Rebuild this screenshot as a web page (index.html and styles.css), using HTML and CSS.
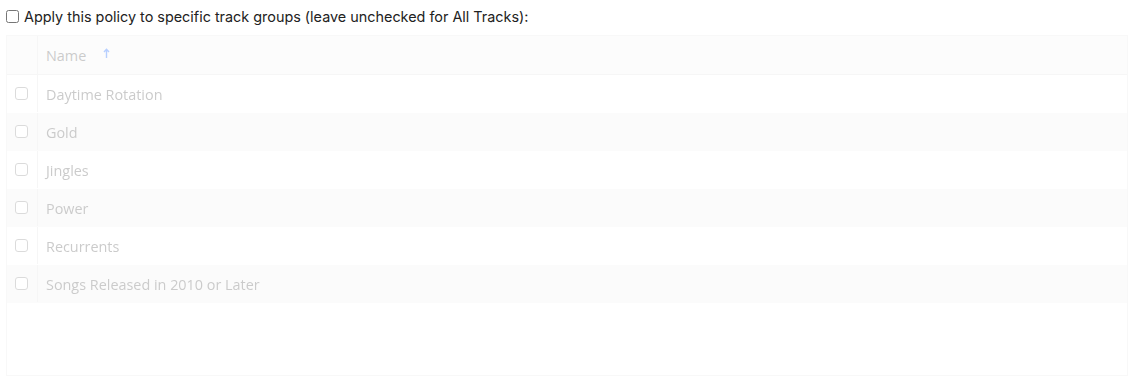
FILE: index.html
```html
<!DOCTYPE html>
<html lang="en">
<head>
  <meta charset="UTF-8">
  <meta name="viewport" content="width=device-width, initial-scale=1.0">
  <title>Track Group Policy</title>
  <link rel="stylesheet" href="styles.css">
</head>
<body>
  <div class="policy">
    <label class="scope">
      <input type="checkbox" id="specific">
      <span>Apply this policy to specific track groups (leave unchecked for All Tracks):</span>
    </label>

    <div class="grid disabled">
      <div class="row header">
        <div class="cell check"></div>
        <div class="cell name">Name
          <svg class="sort" width="7" height="10" viewBox="0 0 7 10">
            <path d="M3.5 10V1.5M1 4L3.5 1.2L6 4" fill="none" stroke="currentColor" stroke-width="1.4"/>
          </svg>
        </div>
      </div>
      <div class="row">
        <div class="cell check"><span class="box"></span></div>
        <div class="cell name">Daytime Rotation</div>
      </div>
      <div class="row odd">
        <div class="cell check"><span class="box"></span></div>
        <div class="cell name">Gold</div>
      </div>
      <div class="row">
        <div class="cell check"><span class="box"></span></div>
        <div class="cell name">Jingles</div>
      </div>
      <div class="row odd">
        <div class="cell check"><span class="box"></span></div>
        <div class="cell name">Power</div>
      </div>
      <div class="row">
        <div class="cell check"><span class="box"></span></div>
        <div class="cell name">Recurrents</div>
      </div>
      <div class="row odd">
        <div class="cell check"><span class="box"></span></div>
        <div class="cell name">Songs Released in 2010 or Later</div>
      </div>
    </div>
  </div>
</body>
</html>
```

FILE: styles.css
```css
* {
  margin: 0;
  padding: 0;
  box-sizing: border-box;
}

body {
  background: #fff;
  font-family: 'Inter', sans-serif;
}

.policy {
  padding: 8px 6px 0 6px;
}

.scope {
  display: flex;
  align-items: center;
  gap: 5px;
  font-size: 14.4px;
  color: #222;
  height: 16px;
}

.scope input {
  width: 13px;
  height: 13px;
  margin: 0;
}

.grid {
  margin-top: 11px;
  width: 1122px;
  height: 341px;
  border: 1px solid #e8e8e8;
  font-family: 'Open Sans', sans-serif;
  font-size: 14.4px;
  color: #505050;
}

.grid.disabled {
  opacity: 0.3;
}

.row {
  display: flex;
  height: 38px;
  border-bottom: 1px solid transparent;
}

.row.header {
  height: 39px;
  background: #f4f4f4;
  border-bottom: 1px solid #e2e2e2;
}

.row.odd {
  background: #f0f0f0;
}

.cell {
  display: flex;
  align-items: center;
}

.cell.check {
  width: 31px;
  padding-left: 8px;
  border-right: 1px solid #e2e2e2;
}

.cell.name {
  padding-left: 8px;
  padding-top: 1px;
  flex: 1;
}

.header .cell.name {
  padding-top: 0;
}

.sort {
  color: #1060ff;
  margin-left: 17px;
  margin-top: -4px;
}

.box {
  width: 13px;
  height: 13px;
  border: 1px solid #888;
  border-radius: 3px;
  background: #fff;
}
```
